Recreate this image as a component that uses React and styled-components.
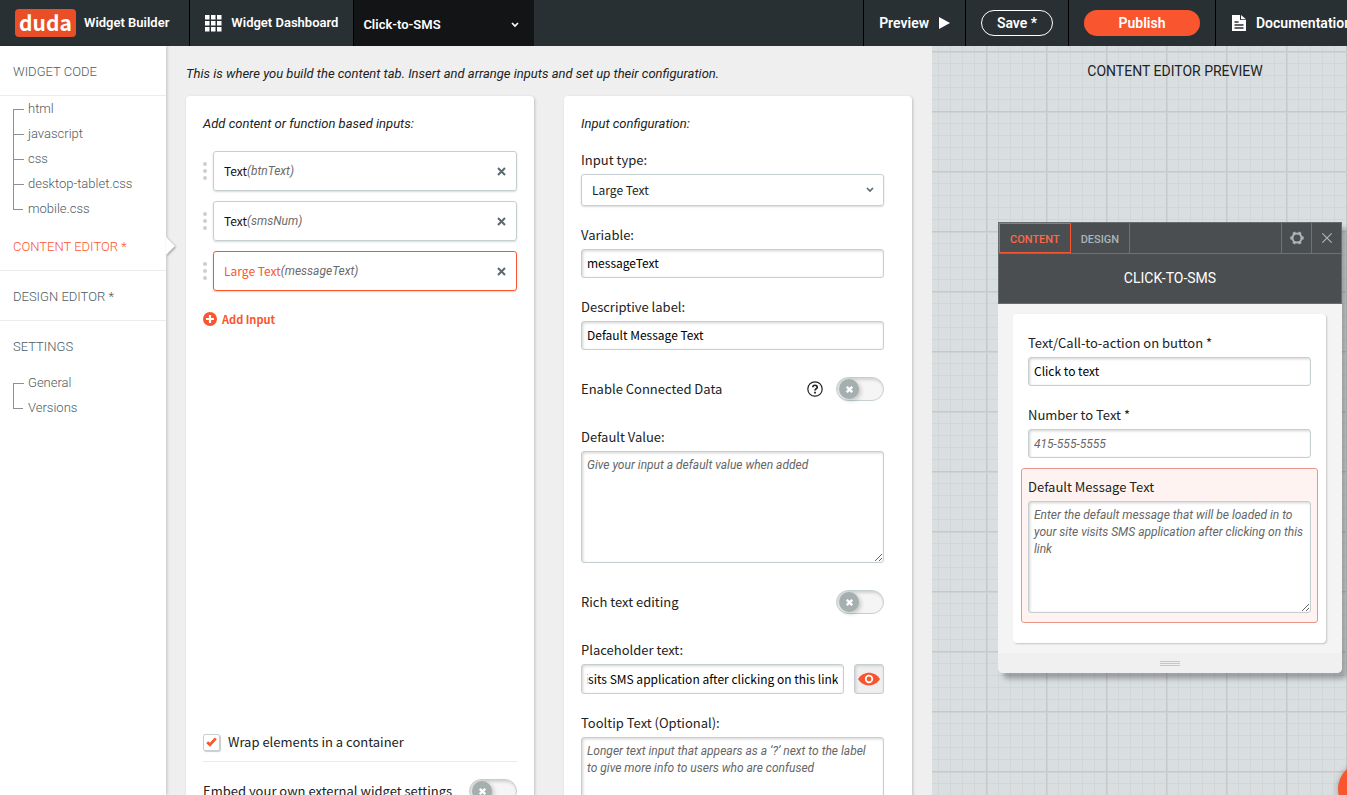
import React, {useEffect, useRef} from "react"
import styled, {createGlobalStyle} from "styled-components"

const sans = `"Noto Sans CJK SC", "Noto Sans", sans-serif`
const roboto = `Roboto, "Liberation Sans", sans-serif`
const orange = "#f9562f"
const edge = "#c5cfd1"

const GlobalStyle = createGlobalStyle`
  * {
    box-sizing: border-box;
  }
  body {
    margin: 0;
    overflow: hidden;
    background: #efefef;
    color: #222;
    font: 13px/20px ${roboto};
  }
  button, input, select, textarea {
    margin: 0;
    font: inherit;
    color: inherit;
  }
  button {
    padding: 0;
    border: 0;
    background: none;
    cursor: pointer;
  }
  ul {
    margin: 0;
    padding: 0;
    list-style: none;
  }
  a {
    color: inherit;
    text-decoration: none;
  }
  svg {
    flex: none;
  }
`

const Page = styled.div`
  display: flex;
  flex-direction: column;
  height: 100vh;
`

/* top bar */
const TopBar = styled.header`
  display: flex;
  flex: none;
  height: 46px;
  overflow: hidden;
  background: #293034;
  color: #fff;
  font-weight: 600;
  white-space: nowrap;
`
const Brand = styled.a`
  display: flex;
  align-items: center;
  gap: 8px;
  padding: 0 20px 0 15px;
`
const Logo = styled.span`
  width: 61px;
  height: 28px;
  border-radius: 4px;
  background: #ea4e26;
  font: 700 21px/26px ${sans};
  text-align: center;
`
const BarLink = styled.a`
  display: flex;
  align-items: center;
  gap: 9px;
  padding: 0 15px;
  border-left: 1px solid #000;
  font-size: ${(p) => (p.$large ? "14px" : "13px")};
`
const DocsLink = styled(BarLink)`
  flex: 0 1 132px;
  overflow: hidden;
  padding-right: 0;
`
const WidgetPicker = styled.div`
  display: flex;
  align-items: center;
  width: 181px;
  margin-right: auto;
  padding: 3px 15px 0 9px;
  border-left: 1px solid #000;
  background: #131415;
`
const BareSelect = styled.select`
  flex: 1;
  min-width: 0;
  height: 100%;
  padding: 0;
  border: 0;
  outline: 0;
  appearance: none;
  background: transparent;
`
const BarCell = styled.div`
  display: flex;
  align-items: center;
  padding: 0 15px;
  border-left: 1px solid #000;
`
const Pill = styled.button`
  width: ${(p) => (p.$filled ? "116px" : "72px")};
  height: 26px;
  border: ${(p) => (p.$filled ? "0" : "1px solid #fff")};
  border-radius: 13px;
  background: ${(p) => (p.$filled ? orange : "transparent")};
  font-size: 14px;
`

/* columns */
const Columns = styled.div`
  display: grid;
  grid-template-columns: 166px minmax(0, 766fr) minmax(0, 415fr);
  flex: 1;
  min-height: 0;
`
const Sidebar = styled.nav`
  position: relative;
  z-index: 1;
  background: #fff;
  box-shadow: 1px 0 3px rgba(0, 0, 0, 0.2);
  color: #4f5b61;
  font-weight: 300;
`
const NavLink = styled.a`
  position: relative;
  display: block;
  padding-left: 13px;
  border-bottom: ${(p) => (p.$plain ? "0" : "1px solid #ececec")};
  color: ${(p) => (p.$active ? orange : "inherit")};
  height: ${(p) => (p.$plain ? "49px" : "50px")};
  line-height: 52px;
`
const Pointer = styled.svg`
  position: absolute;
  top: 16px;
  left: 100%;
  overflow: visible;
  filter: drop-shadow(1px 1px 1px rgba(0, 0, 0, 0.35));
`
const Tree = styled.ul`
  padding-left: 13px;
`
const TreeItem = styled.li`
  position: relative;
  padding-left: 15px;
  line-height: 25px;

  &::before {
    content: "";
    position: absolute;
    top: 13px;
    left: 0;
    width: 10px;
    height: 25px;
    border-top: 1px solid #8b9193;
    border-left: 1px solid #8b9193;
  }
  &:last-child::before {
    height: 1px;
    border-left: 0;
  }
`

const Main = styled.main`
  display: flex;
  flex-direction: column;
  min-height: 0;
  overflow: hidden;
  padding: 18px 20px 0;
`
const Intro = styled.p`
  flex: none;
  margin: 0 0 12px;
  font-style: italic;
`
const Cards = styled.div`
  display: grid;
  grid-template-columns: 1fr 1fr;
  gap: 30px;
  flex: none;
`
const Card = styled.section`
  min-width: 0;
  padding: 18px ${(p) => (p.$gutter ? "28px" : "17px")} 17px 17px;
  border-radius: 4px;
  background: #fff;
  box-shadow: 1px 1px 3px rgba(0, 0, 0, 0.2);
  font-family: ${sans};
`
const CardTitle = styled.h2`
  margin: 0 0 16px;
  font: italic 400 13px/20px ${roboto};
`

/* input list */
const ListArea = styled.div`
  min-height: 618px;
`
const InputList = styled.ul`
  display: flex;
  flex-direction: column;
  gap: 10px;
  padding-top: 1px;
`
const InputRow = styled.li`
  display: flex;
  align-items: center;
  gap: 6px;
`
const InputItem = styled.div`
  display: flex;
  flex: 1;
  align-items: center;
  height: 40px;
  padding: 0 10px;
  border: 1px solid ${(p) => (p.$active ? orange : edge)};
  border-radius: 3px;
  box-shadow: 0 1px 2px rgba(0, 0, 0, 0.15);
  font-size: 12px;
`
const TypeName = styled.span`
  color: ${(p) => (p.$active ? orange : "#111")};
`
const VarName = styled.em`
  flex: 1;
  color: #6b6b6b;
  font-family: ${roboto};
`
const IconButton = styled.button`
  display: flex;
`
const AddButton = styled.button`
  display: flex;
  align-items: center;
  gap: 5px;
  margin-top: 18px;
  color: ${orange};
  font-size: 11px;
  font-weight: 700;
`
const CheckRow = styled.label`
  display: flex;
  align-items: center;
  gap: 8px;
  padding-bottom: 9px;
  border-bottom: 1px solid #ececec;
  font-size: 13px;
`
const CheckBox = styled.span`
  display: grid;
  place-items: center;
  width: 17px;
  height: 17px;
  border: 1px solid ${edge};
  border-radius: 2px;
  box-shadow: 1px 1px 1px rgba(0, 0, 0, 0.2);
`
const HiddenCheck = styled.input`
  position: absolute;
  opacity: 0;
`

/* form */
const Stack = styled.div`
  display: flex;
  flex-direction: column;
  gap: 19px;
`
const Field = styled.div`
  display: flex;
  flex-direction: column;
  gap: 4px;
`
const Label = styled.label`
  font: 400 13px/20px ${sans};
`
const SelectBox = styled.div`
  display: flex;
  align-items: center;
  height: 32px;
  padding: 0 9px 0 10px;
  border: 1px solid ${edge};
  border-radius: 3px;
  box-shadow: 0 1px 2px rgba(0, 0, 0, 0.15);
  font-size: 12px;
`
const TextInput = styled.input`
  width: 100%;
  min-width: 0;
  height: ${(p) => (p.$tall ? "30px" : "29px")};
  padding: 0 5px 2px;
  border: 1px solid ${edge};
  border-radius: 3px;
  outline: 0;
  background: #fff;
  box-shadow: inset 1px 1px 3px rgba(0, 0, 0, 0.18);
  color: #000;
  font: 12px/17px ${sans};

  &::placeholder {
    color: #666;
    font-family: ${roboto};
    font-style: italic;
  }
`
const TextArea = styled.textarea`
  display: block;
  width: 100%;
  height: 112px;
  padding: 5px;
  border: 1px solid ${edge};
  border-radius: 3px;
  outline: 0;
  background: #fff;
  box-shadow: inset 1px 1px 3px rgba(0, 0, 0, 0.18);
  font: 12px/17px ${roboto};

  &::placeholder {
    color: #666;
    font-style: italic;
  }
`
const SwitchRow = styled.div`
  display: flex;
  align-items: center;
  gap: 13px;
  padding: 8px 0 7px;
`
const SwitchLabel = styled(Label)`
  flex: 1;
`
const Track = styled.span`
  display: flex;
  align-items: center;
  width: 48px;
  height: 24px;
  padding: 0 2px;
  border: 1px solid ${edge};
  border-radius: 12px;
  background: #f5f5f5;
  box-shadow: inset 1px 2px 3px rgba(0, 0, 0, 0.15);
`
const Knob = styled.span`
  display: grid;
  place-items: center;
  width: 20px;
  height: 20px;
  border-radius: 50%;
  background: #a5afb0;
  box-shadow: 2px 2px 4px rgba(0, 0, 0, 0.2);
`
const EmbedRow = styled(SwitchRow)`
  padding-top: 17px;
`
const InputWithButton = styled.div`
  display: flex;
  gap: 10px;
`
const EyeButton = styled.button`
  display: grid;
  flex: none;
  place-items: center;
  width: 30px;
  height: 30px;
  border: 1px solid ${edge};
  border-radius: 3px;
  background: #efefef;
  box-shadow: inset 1px 1px 3px rgba(0, 0, 0, 0.15);
`

/* preview */
const PreviewPane = styled.aside`
  min-height: 0;
  overflow: hidden;
  padding-top: 15px;
  background-color: #d9dfe1;
  background-image:
    linear-gradient(#c8c8c9 1px, #d0d2d3 1px, #d0d2d3 2px, transparent 2px),
    linear-gradient(90deg, #c8c8c9 1px, #d0d2d3 1px, #d0d2d3 2px, transparent 2px),
    linear-gradient(#d2d6d7 1px, transparent 1px),
    linear-gradient(90deg, #d2d6d7 1px, transparent 1px);
  background-position: 54px 5px, 54px 5px, 6px 5px, 6px 5px;
  background-size: 60px 60px, 60px 60px, 12px 12px, 12px 12px;
`
const PaneTitle = styled.h1`
  margin: 0 0 141px;
  padding-left: 71px;
  font-size: 14px;
  font-weight: 400;
  line-height: 20px;
  text-align: center;
`
const Popup = styled.div`
  margin: 0 5px 0 66px;
  border-radius: 0 0 5px 5px;
  background: #f4f4f4;
  box-shadow: 5px 6px 5px rgba(0, 0, 0, 0.28);
`
const PopupHead = styled.div`
  border: 1px solid #656d6f;
  background: #4a4e50;
`
const Tabs = styled.div`
  display: flex;
  height: 31px;
  border-bottom: 1px solid #6c7375;
`
const Tab = styled.button`
  padding: 3px 10px 0;
  border: ${(p) => (p.$active ? `1px solid ${orange}` : "0")};
  border-right: 1px solid ${(p) => (p.$active ? orange : "#6c7375")};
  color: ${(p) => (p.$active ? "#f96a4a" : "#a9b5b9")};
  font-size: 11px;
  font-weight: 500;
`
const ToolGroup = styled.div`
  display: flex;
  margin-left: auto;
`
const TabTool = styled.button`
  display: grid;
  place-items: center;
  width: 30px;
  border-left: 1px solid #6c7375;
`
const PopupTitle = styled.h2`
  margin: 0;
  color: #fff;
  font-size: 14px;
  font-weight: 400;
  line-height: 49px;
  text-align: center;
`
const PopupCard = styled.div`
  display: flex;
  flex-direction: column;
  gap: 19px;
  margin: 10px 16px 10px 15px;
  padding: 19px 15px 20px;
  border-radius: 4px;
  background: #fff;
  box-shadow: 1px 1px 2px rgba(0, 0, 0, 0.2);
`
const Highlight = styled(Field)`
  margin: -9px -7px 0;
  padding: 8px 6px 9px;
  border: 1px solid #e8968a;
  border-radius: 3px;
  background: #fff3f1;
`
const Grip = styled.div`
  display: grid;
  place-items: center;
  height: 20px;
  border-radius: 0 0 5px 5px;
  background: #f0f0f0;
`
const HelpBubble = styled.button`
  position: fixed;
  right: -45px;
  bottom: -21px;
  z-index: 2;
  width: 54px;
  height: 54px;
  border-radius: 50%;
  background: ${orange};
  box-shadow: 0 1px 6px rgba(0, 0, 0, 0.3);
`

const Cross = ({size = 9, color = "#5b6a70", width = 2}) => (
  <svg width={size} height={size} viewBox="0 0 9 9" aria-hidden="true">
    <path d="M1 1l7 7M8 1L1 8" stroke={color} strokeWidth={width} />
  </svg>
)

const Chevron = ({color}) => (
  <svg width="8" height="6" viewBox="0 0 8 6" aria-hidden="true">
    <path d="M1 1l3 3 3-3" fill="none" stroke={color} strokeWidth="1.7" />
  </svg>
)

const GridIcon = () => (
  <svg width="17" height="17" viewBox="0 0 17 17" fill="#fff" aria-hidden="true">
    {[0, 6, 12].map((y) =>
      [0, 6, 12].map((x) => (
        <rect key={`${x}-${y}`} x={x} y={y} width="4.5" height="4.5" />
      ))
    )}
  </svg>
)

const DocIcon = () => (
  <svg width="16" height="16" viewBox="0 0 16 16" aria-hidden="true">
    <path d="M1 0h8v5h6v11H1z" fill="#fff" />
    <path d="M10 0l5 4.3h-5z" fill="#fff" />
    <path d="M3.5 7h4M3.5 10h9M3.5 13h9" stroke="#293034" strokeWidth="1.3" />
  </svg>
)

const HandleIcon = () => (
  <svg width="4" height="18" viewBox="0 0 4 18" fill="#cfcfcf" aria-hidden="true">
    <circle cx="2" cy="2" r="2" />
    <circle cx="2" cy="9" r="2" />
    <circle cx="2" cy="16" r="2" />
  </svg>
)

const PlusIcon = () => (
  <svg width="14" height="14" viewBox="0 0 14 14" aria-hidden="true">
    <circle cx="7" cy="7" r="7" fill={orange} />
    <path d="M7 3v8M3 7h8" stroke="#fff" strokeWidth="2.2" />
  </svg>
)

const CheckIcon = () => (
  <svg width="11" height="10" viewBox="0 0 11 10" aria-hidden="true">
    <path d="M1.2 5.2l2.8 2.6L9.8 1.4" fill="none" stroke={orange} strokeWidth="2.8" />
  </svg>
)

const QuestionIcon = () => (
  <svg width="16" height="16" viewBox="0 0 16 16" fill="none" stroke="#222" aria-hidden="true">
    <circle cx="8" cy="8" r="7.2" strokeWidth="1.2" />
    <path d="M5.8 6.3C5.8 3.6 10.2 3.6 10.2 6.2C10.2 7.8 8 7.7 8 9.6" strokeWidth="1.7" />
    <path d="M8 10.8v1.8" strokeWidth="1.8" />
  </svg>
)

const EyeIcon = () => (
  <svg width="22" height="14" viewBox="0 0 22 14" aria-hidden="true">
    <path d="M0 7C5-1.5 17-1.5 22 7C17 15.5 5 15.5 0 7z" fill={orange} />
    <circle cx="11" cy="7" r="3.3" fill={orange} stroke="#fff" strokeWidth="1.7" />
  </svg>
)

const GearIcon = () => (
  <svg width="14" height="14" viewBox="0 0 14 14" fill="none" stroke="#a9b5b9" aria-hidden="true">
    <circle cx="7" cy="7" r="4.5" strokeWidth="2" />
    {[0, 60, 120].map((angle) => (
      <path
        key={angle}
        d="M.3 7h2.2M11.5 7h2.2"
        strokeWidth="3"
        transform={`rotate(${angle} 7 7)`}
      />
    ))}
  </svg>
)

const files = ["html", "javascript", "css", "desktop-tablet.css", "mobile.css"]
const settings = ["General", "Versions"]
const inputs = [
  {type: "Text", variable: "btnText"},
  {type: "Text", variable: "smsNum"},
  {type: "Large Text", variable: "messageText", active: true},
]
const messageHint =
  "Enter the default message that will be loaded in to your site visits SMS application after clicking on this link"

const NavTree = ({items}) => (
  <Tree>
    {items.map((item) => (
      <TreeItem key={item}>
        <a href={`#${item}`}>{item}</a>
      </TreeItem>
    ))}
  </Tree>
)

const Switch = ({id}) => (
  <label>
    <HiddenCheck type="checkbox" role="switch" id={id} />
    <Track>
      <Knob>
        <Cross size={7} color="#fff" width={3} />
      </Knob>
    </Track>
  </label>
)

const PlaceholderInput = () => {
  const ref = useRef(null)

  // keep the end of the long value in view
  useEffect(() => {
    ref.current.scrollLeft = ref.current.scrollWidth
  }, [])

  return <TextInput id="placeholder" ref={ref} defaultValue={messageHint} $tall />
}

const Header = () => (
  <TopBar>
    <Brand href="#home">
      <Logo>duda</Logo>
      Widget Builder
    </Brand>
    <BarLink href="#dashboard">
      <GridIcon />
      Widget Dashboard
    </BarLink>
    <WidgetPicker>
      <BareSelect aria-label="Widget">
        <option>Click-to-SMS</option>
      </BareSelect>
      <Chevron color="#fff" />
    </WidgetPicker>
    <BarLink href="#preview" $large>
      Preview
      <svg width="12" height="12" viewBox="0 0 12 12" aria-hidden="true">
        <path d="M1 0l11 6-11 6z" fill="#fff" />
      </svg>
    </BarLink>
    <BarCell>
      <Pill>Save *</Pill>
    </BarCell>
    <BarCell>
      <Pill $filled>Publish</Pill>
    </BarCell>
    <DocsLink href="#docs" $large>
      <DocIcon />
      Documentation
    </DocsLink>
  </TopBar>
)

const SideNav = () => (
  <Sidebar>
    <NavLink href="#code">WIDGET CODE</NavLink>
    <NavTree items={files} />
    <NavLink href="#content" $active>
      CONTENT EDITOR *
      <Pointer width="10" height="18" viewBox="0 0 10 18" aria-hidden="true">
        <path d="M0 0l9 9-9 9z" fill="#fff" />
      </Pointer>
    </NavLink>
    <NavLink href="#design">DESIGN EDITOR *</NavLink>
    <NavLink href="#settings" $plain>
      SETTINGS
    </NavLink>
    <NavTree items={settings} />
  </Sidebar>
)

const InputsCard = () => (
  <Card>
    <ListArea>
      <CardTitle>Add content or function based inputs:</CardTitle>
      <InputList>
        {inputs.map(({type, variable, active}) => (
          <InputRow key={variable}>
            <HandleIcon />
            <InputItem $active={active}>
              <TypeName $active={active}>{type}</TypeName>
              <VarName>({variable})</VarName>
              <IconButton aria-label={`Remove ${variable}`}>
                <Cross />
              </IconButton>
            </InputItem>
          </InputRow>
        ))}
      </InputList>
      <AddButton>
        <PlusIcon />
        Add Input
      </AddButton>
    </ListArea>
    <CheckRow>
      <HiddenCheck type="checkbox" defaultChecked />
      <CheckBox>
        <CheckIcon />
      </CheckBox>
      Wrap elements in a container
    </CheckRow>
    <EmbedRow>
      <SwitchLabel htmlFor="embed">Embed your own external widget settings</SwitchLabel>
      <Switch id="embed" />
    </EmbedRow>
  </Card>
)

const ConfigCard = () => (
  <Card $gutter>
    <CardTitle>Input configuration:</CardTitle>
    <Stack>
      <Field>
        <Label htmlFor="type">Input type:</Label>
        <SelectBox>
          <BareSelect id="type">
            <option>Large Text</option>
          </BareSelect>
          <Chevron color="#5b6a70" />
        </SelectBox>
      </Field>
      <Field>
        <Label htmlFor="variable">Variable:</Label>
        <TextInput id="variable" defaultValue="messageText" />
      </Field>
      <Field>
        <Label htmlFor="label">Descriptive label:</Label>
        <TextInput id="label" defaultValue="Default Message Text" />
      </Field>
      <SwitchRow>
        <SwitchLabel htmlFor="connected">Enable Connected Data</SwitchLabel>
        <IconButton aria-label="About connected data">
          <QuestionIcon />
        </IconButton>
        <Switch id="connected" />
      </SwitchRow>
      <Field>
        <Label htmlFor="default">Default Value:</Label>
        <TextArea id="default" placeholder="Give your input a default value when added" />
      </Field>
      <SwitchRow>
        <SwitchLabel htmlFor="rich">Rich text editing</SwitchLabel>
        <Switch id="rich" />
      </SwitchRow>
      <Field>
        <Label htmlFor="placeholder">Placeholder text:</Label>
        <InputWithButton>
          <PlaceholderInput />
          <EyeButton aria-label="Toggle placeholder">
            <EyeIcon />
          </EyeButton>
        </InputWithButton>
      </Field>
      <Field>
        <Label htmlFor="tooltip">Tooltip Text (Optional):</Label>
        <TextArea
          id="tooltip"
          placeholder="Longer text input that appears as a ‘?’ next to the label to give more info to users who are confused"
        />
      </Field>
    </Stack>
  </Card>
)

const Preview = () => (
  <PreviewPane>
    <PaneTitle>CONTENT EDITOR PREVIEW</PaneTitle>
    <Popup>
      <PopupHead>
        <Tabs>
          <Tab $active>CONTENT</Tab>
          <Tab>DESIGN</Tab>
          <ToolGroup>
            <TabTool aria-label="Settings">
              <GearIcon />
            </TabTool>
            <TabTool aria-label="Close">
              <Cross size={12} color="#a9b5b9" width={0.9} />
            </TabTool>
          </ToolGroup>
        </Tabs>
        <PopupTitle>CLICK-TO-SMS</PopupTitle>
      </PopupHead>
      <PopupCard>
        <Field>
          <Label htmlFor="cta">Text/Call-to-action on button *</Label>
          <TextInput id="cta" defaultValue="Click to text" />
        </Field>
        <Field>
          <Label htmlFor="number">Number to Text *</Label>
          <TextInput id="number" placeholder="415-555-5555" />
        </Field>
        <Highlight>
          <Label htmlFor="message">Default Message Text</Label>
          <TextArea id="message" placeholder={messageHint} />
        </Highlight>
      </PopupCard>
      <Grip>
        <svg width="20" height="5" viewBox="0 0 20 5" aria-hidden="true">
          <path d="M0 .5h20M0 2.5h20M0 4.5h20" stroke="#c6c6c6" />
        </svg>
      </Grip>
    </Popup>
  </PreviewPane>
)

const App = () => (
  <Page>
    <GlobalStyle />
    <Header />
    <Columns>
      <SideNav />
      <Main>
        <Intro>
          This is where you build the content tab. Insert and arrange inputs and set up their
          configuration.
        </Intro>
        <Cards>
          <InputsCard />
          <ConfigCard />
        </Cards>
      </Main>
      <Preview />
    </Columns>
    <HelpBubble aria-label="Help" />
  </Page>
)

export default App
